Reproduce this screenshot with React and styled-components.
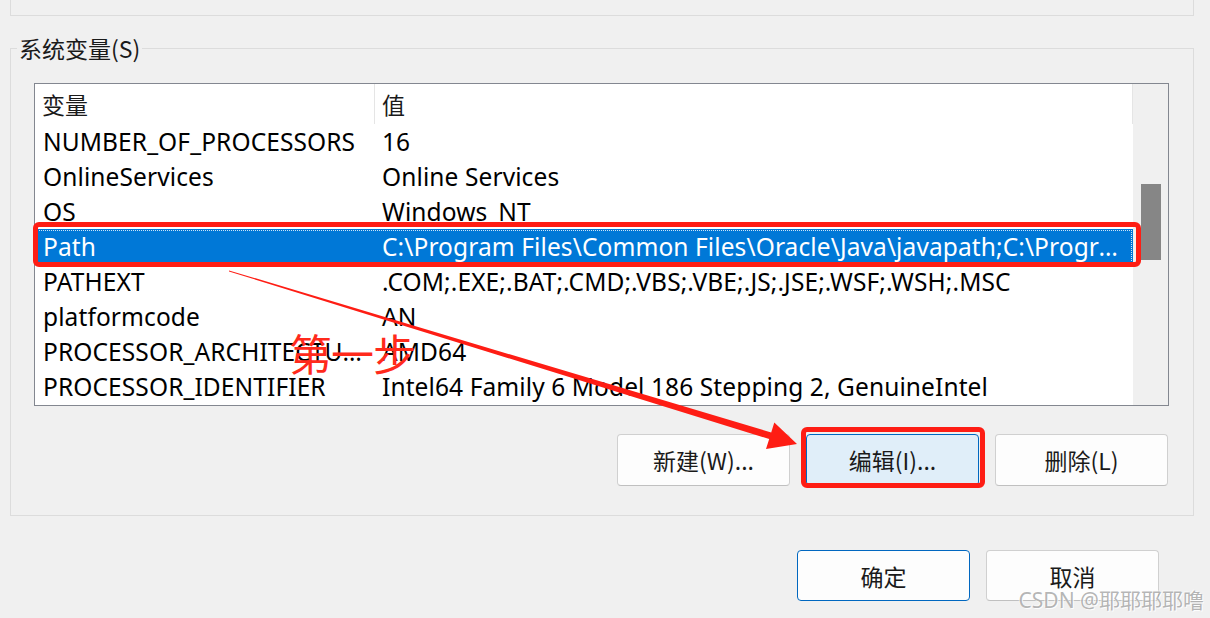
import React from 'react';
import styled, { createGlobalStyle } from 'styled-components';

const GlobalStyle = createGlobalStyle`
  html, body {
    margin: 0;
    padding: 0;
    background: #f0f0f0;
  }
  * {
    box-sizing: border-box;
  }
`;

const FONT = `"Noto Sans", "Noto Sans CJK SC", sans-serif`;
const CJK = `"Noto Sans CJK SC", "Noto Sans", sans-serif`;

const Page = styled.div`
  position: relative;
  width: 1210px;
  height: 618px;
  overflow: hidden;
  background: #f0f0f0;
  font-family: ${FONT};
  color: #000;
  display: flex;
  flex-direction: column;
`;

const TopGroup = styled.div`
  margin-left: 10px;
  width: 1184px;
  height: 16px;
  border: 1px solid #dcdcdc;
  border-top: none;
`;

const GroupBox = styled.fieldset`
  margin: 17px 0 0 10px;
  width: 1184px;
  padding: 0;
  border: 1px solid #dcdcdc;
  min-width: 0;
`;

const GroupLabel = styled.legend`
  margin-left: 6px;
  padding: 0 2px;
  font-family: ${CJK};
  font-size: 23px;
  line-height: 30px;
  color: #1a1a1a;
`;

const GroupBody = styled.div`
  padding: 20px 24px 29px 23px;
`;

const ListView = styled.div`
  display: flex;
  height: 323px;
  border: 1px solid #838790;
  background: #fff;
`;

const Table = styled.div`
  flex: 1;
  min-width: 0;
  display: flex;
  flex-direction: column;
`;

const HeaderRow = styled.div`
  display: grid;
  grid-template-columns: 340px 1fr;
  height: 40px;
  border-right: 1px solid #e5e5e5;
`;

const HeaderCell = styled.div`
  display: flex;
  align-items: center;
  padding-left: 7px;
  font-family: ${CJK};
  font-size: 23px;
  color: #1a1a1a;
  border-right: ${p => (p.$sep ? '1px solid #e5e5e5' : 'none')};
`;

const Row = styled.div`
  display: grid;
  grid-template-columns: 340px 1fr;
  height: 35px;
  align-items: center;
  background: ${p => (p.$selected ? '#0078d7' : 'transparent')};
  color: ${p => (p.$selected ? '#fff' : '#000')};
  outline: ${p => (p.$selected ? '1px dotted rgba(255,255,255,0.8)' : 'none')};
  outline-offset: -2px;
`;

const Cell = styled.div`
  padding: 0 8px 0 ${p => (p.$value ? 7 : 8)}px;
  font-size: 24.5px;
  line-height: 35px;
  white-space: nowrap;
  overflow: hidden;
  text-overflow: ellipsis;
  letter-spacing: 0.1px;
`;

const ScrollBar = styled.div`
  width: 35px;
  background: #f0f0f0;
  padding: 100px 0 0 8px;
`;

const Thumb = styled.div`
  width: 20px;
  height: 76px;
  background: #868686;
`;

const ButtonRow = styled.div`
  display: flex;
  justify-content: flex-end;
  gap: ${p => p.$gap || 16}px;
  margin-top: ${p => p.$top || 0}px;
  padding-right: ${p => p.$right || 0}px;
`;

const Button = styled.button`
  width: ${p => p.$w || 173}px;
  height: ${p => p.$h || 52}px;
  border-radius: 4px;
  border: 1px solid ${p => (p.$accent ? '#0067c0' : '#d0d0d0')};
  border-bottom-color: ${p => (p.$accent ? '#0067c0' : '#c0c0c0')};
  background: ${p => (p.$hot ? '#e0eef9' : '#fdfdfd')};
  font-family: ${CJK};
  font-size: 23px;
  color: #1a1a1a;
  padding: 0;
  cursor: default;
`;

const Highlight = styled.div`
  position: absolute;
  border: 5px solid #fe1d14;
  border-radius: 6px;
  pointer-events: none;
`;

const Annotation = styled.svg`
  position: absolute;
  inset: 0;
  pointer-events: none;
`;

const StepLabel = styled.div`
  position: absolute;
  left: 289px;
  top: 324px;
  font-family: ${CJK};
  font-size: 43px;
  line-height: 56px;
  color: #ff2a1c;
  letter-spacing: -1px;
`;

const Watermark = styled.div`
  position: absolute;
  right: 6px;
  bottom: 4px;
  font-family: ${FONT};
  font-size: 21px;
  color: rgba(150, 150, 150, 0.7);
  text-shadow: 1px 1px 0 rgba(255,255,255,0.9), -1px -1px 0 rgba(255,255,255,0.6);
  white-space: nowrap;
`;

const variables = [
  ['NUMBER_OF_PROCESSORS', '16'],
  ['OnlineServices', 'Online Services'],
  ['OS', 'Windows_NT'],
  ['Path', 'C:\\Program Files\\Common Files\\Oracle\\Java\\javapath;C:\\Program Files (x86)\\Common Files\\Oracle\\Java\\javapath'],
  ['PATHEXT', '.COM;.EXE;.BAT;.CMD;.VBS;.VBE;.JS;.JSE;.WSF;.WSH;.MSC'],
  ['platformcode', 'AN'],
  ['PROCESSOR_ARCHITECTURE', 'AMD64'],
  ['PROCESSOR_IDENTIFIER', 'Intel64 Family 6 Model 186 Stepping 2, GenuineIntel'],
];

// 箭头：从 Path 行左下方细线开始，逐渐变粗，指向“编辑”按钮
const ArrowShape = () => (
  <Annotation width="1210" height="618" viewBox="0 0 1210 618">
    <polygon
      fill="#fe1d14"
      points="229,270.4 771.2,432.5 774.3,422.4 797,444 766,449 769.2,439.1 229,271.4"
    />
  </Annotation>
);

const App = () => {
  return (
    <>
      <GlobalStyle />
      <Page>
        <TopGroup />
        <GroupBox>
          <GroupLabel>系统变量(S)</GroupLabel>
          <GroupBody>
            <ListView>
              <Table>
                <HeaderRow>
                  <HeaderCell $sep>变量</HeaderCell>
                  <HeaderCell>值</HeaderCell>
                </HeaderRow>
                {variables.map(([name, value]) => (
                  <Row key={name} $selected={name === 'Path'}>
                    <Cell>{name}</Cell>
                    <Cell $value>{value}</Cell>
                  </Row>
                ))}
              </Table>
              <ScrollBar>
                <Thumb />
              </ScrollBar>
            </ListView>
            <ButtonRow $top={28} $gap={16} $right={1}>
              <Button>新建(W)...</Button>
              <Button $hot $accent>编辑(I)...</Button>
              <Button>删除(L)</Button>
            </ButtonRow>
          </GroupBody>
        </GroupBox>
        <ButtonRow $top={34} $gap={16} $right={51}>
          <Button $accent $h={51}>确定</Button>
          <Button $h={51}>取消</Button>
        </ButtonRow>

        <Highlight style={{ left: 33, top: 222, width: 1108, height: 45 }} />
        <Highlight style={{ left: 801, top: 427, width: 184, height: 61 }} />
        <ArrowShape />
        <StepLabel>第一步</StepLabel>
        <Watermark>CSDN @耶耶耶耶噜</Watermark>
      </Page>
    </>
  );
};

export default App;
